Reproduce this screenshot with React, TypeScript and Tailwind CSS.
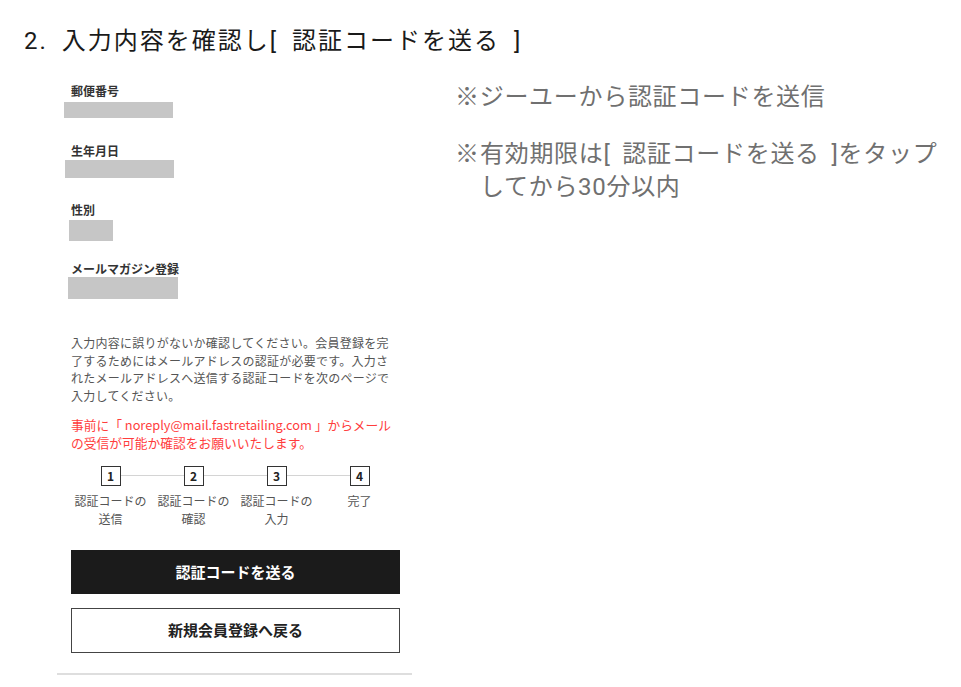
import React from 'react'

const fields = [
  { label: '郵便番号', bar: 'ml-[7px] w-[109px] h-[16px] mt-[4px]' },
  { label: '生年月日', bar: 'ml-[8px] w-[109px] h-[18px] mt-[2px]' },
  { label: '性別', bar: 'ml-[12px] w-[44px] h-[21px] mt-[3px]' },
  { label: 'メールマガジン登録', bar: 'ml-[11px] w-[110px] h-[22px] mt-[1px]' },
]

const gaps = ['mt-[14px]', 'mt-[26px]', 'mt-[25px]', 'mt-[21px]']

const steps = [
  { n: 1, lines: ['認証コードの', '送信'] },
  { n: 2, lines: ['認証コードの', '確認'] },
  { n: 3, lines: ['認証コードの', '入力'] },
  { n: 4, lines: ['完了'] },
]

const jp = { fontFamily: 'Roboto, "Noto Sans CJK JP", sans-serif' }
const ui = { fontFamily: '"Noto Sans CJK JP", sans-serif' }

const App: React.FC = () => {
  return (
    <div className="w-[961px] h-[687px] bg-white overflow-hidden" style={jp}>
      <h1 className="pt-[23px] pl-[24px] text-[24px] leading-[36px] tracking-[2px] [word-spacing:6px] text-[#1a1a1a] font-normal whitespace-nowrap">
        2. 入力内容を確認し[ 認証コードを送る ]
      </h1>

      <div className="flex mt-[11px]">
        {/* スマホ画面のキャプチャ */}
        <div className="ml-[57px] w-[355px] shrink-0" style={ui}>
          {fields.map((f, i) => (
            <div key={f.label} className={gaps[i]}>
              <p className="ml-[14px] text-[12px] leading-[14px] font-bold text-[#333]">{f.label}</p>
              <div className={`bg-[#c6c6c6] ${f.bar}`} />
            </div>
          ))}

          <p className="mt-[35px] ml-[14px] w-[322px] text-[12px] tracking-[0.25px] leading-[17.7px] text-[#555]">
            入力内容に誤りがないか確認してください。会員登録を完了するためにはメールアドレスの認証が必要です。入力されたメールアドレスへ送信する認証コードを次のページで入力してください。
          </p>
          <p className="mt-[11px] ml-[14px] w-[330px] text-[12.75px] leading-[18px] text-[#ff3d3d]">
            事前に「 noreply@mail.fastretailing.com 」からメールの受信が可能か確認をお願いいたします。
          </p>

          <div className="relative mt-[14px] ml-[12px] w-[332px] grid grid-cols-4">
            <div className="absolute left-[41px] right-[41px] top-[9px] h-px bg-[#d4d4d4]" />
            {steps.map(s => (
              <div key={s.n} className="relative flex flex-col items-center">
                <div className="w-[20px] h-[20px] border-[1.5px] border-[#333] bg-white flex items-center justify-center text-[12px] font-bold text-[#222] leading-none">
                  {s.n}
                </div>
                <div className="mt-[6px] text-center text-[12px] leading-[18px] text-[#555]">
                  {s.lines.map(l => (
                    <div key={l}>{l}</div>
                  ))}
                </div>
              </div>
            ))}
          </div>

          <button className="mt-[22px] ml-[14px] w-[329px] h-[44px] bg-[#1b1b1b] text-white text-[15px] font-bold flex items-center justify-center">
            認証コードを送る
          </button>
          <button className="mt-[14px] ml-[14px] w-[329px] h-[45px] bg-white border border-[#444] text-[#222] text-[15px] font-bold flex items-center justify-center">
            新規会員登録へ戻る
          </button>

          <div className="mt-[20px] h-[2px] bg-[#dedede]" />
        </div>

        {/* 注意書き */}
        <div className="ml-[43px] mt-[11px] text-[24px] leading-[33px] tracking-[0.7px] [word-spacing:5px] text-[#707070] whitespace-nowrap">
          <p>※ジーユーから認証コードを送信</p>
          <p className="mt-[24px] flex">
            <span className="w-[25px] shrink-0">※</span>
            <span>
              有効期限は[ 認証コードを送る ]をタップ
              <br />
              してから30分以内
            </span>
          </p>
        </div>
      </div>
    </div>
  )
}

export default App
